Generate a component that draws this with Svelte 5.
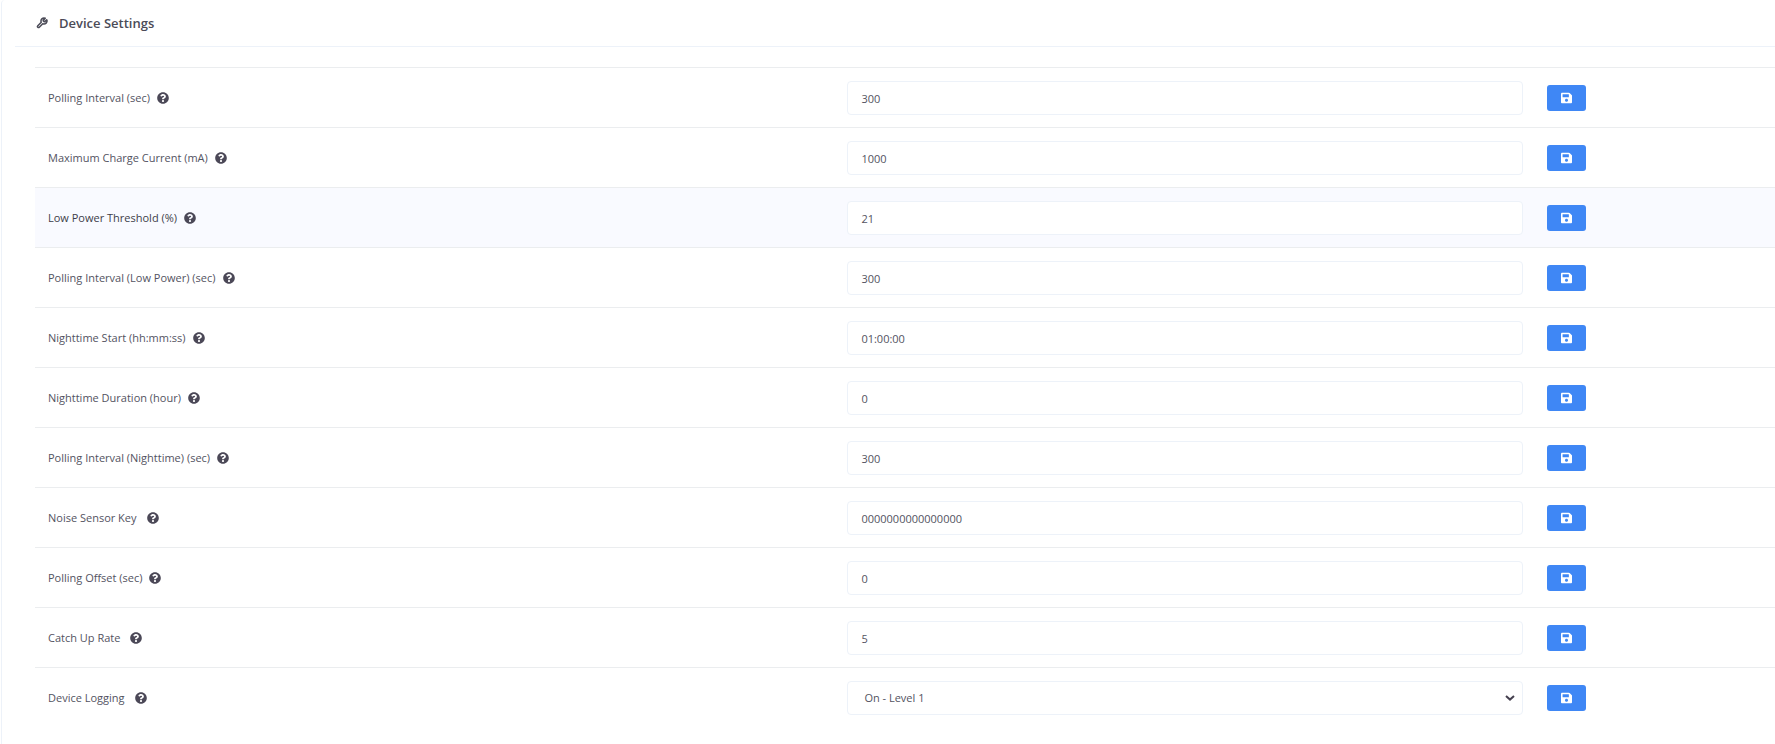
<script lang="ts">
	type Setting = {
		id: string;
		label: string;
		value: string;
		spaced?: boolean;
		active?: boolean;
		options?: string[];
	};

	let settings: Setting[] = $state([
		{ id: 'polling-interval', label: 'Polling Interval (sec)', value: '300' },
		{ id: 'max-charge', label: 'Maximum Charge Current (mA)', value: '1000' },
		{ id: 'low-power', label: 'Low Power Threshold (%)', value: '21', active: true },
		{ id: 'polling-low-power', label: 'Polling Interval (Low Power) (sec)', value: '300' },
		{ id: 'night-start', label: 'Nighttime Start (hh:mm:ss)', value: '01:00:00' },
		{ id: 'night-duration', label: 'Nighttime Duration (hour)', value: '0' },
		{ id: 'polling-night', label: 'Polling Interval (Nighttime) (sec)', value: '300' },
		{ id: 'noise-key', label: 'Noise Sensor Key', value: '0000000000000000', spaced: true },
		{ id: 'polling-offset', label: 'Polling Offset (sec)', value: '0' },
		{ id: 'catch-up', label: 'Catch Up Rate', value: '5', spaced: true },
		{
			id: 'logging',
			label: 'Device Logging',
			value: 'On - Level 1',
			spaced: true,
			options: ['Off', 'On - Level 1', 'On - Level 2']
		}
	]);
</script>

<section class="card">
	<header class="card-header">
		<svg class="tool-icon" viewBox="0 0 24 24" aria-hidden="true">
			<path
				d="M14.7 6.3a1 1 0 0 0 0 1.4l1.6 1.6a1 1 0 0 0 1.4 0l3.77-3.77a6 6 0 0 1-7.94 7.94l-6.91 6.91a2.12 2.12 0 0 1-3-3l6.91-6.91a6 6 0 0 1 7.94-7.94l-3.76 3.76z"
			/>
		</svg>
		<h4>Device Settings</h4>
	</header>

	<div class="card-body">
		<table>
			<colgroup>
				<col class="col-label" />
				<col class="col-value" />
				<col />
			</colgroup>
			<tbody>
				{#each settings as setting (setting.id)}
					<tr class:active={setting.active}>
						<td>
							<div class="label-row" class:spaced={setting.spaced}>
								<label for={setting.id}>{setting.label}</label>
								<button class="help-btn" type="button" aria-label="Help: {setting.label}">
									<svg viewBox="0 0 512 512" aria-hidden="true">
										<path
											d="M504 256c0 136.997-111.043 248-248 248S8 392.997 8 256C8 119.083 119.043 8 256 8s248 111.083 248 248zM262.655 90c-54.497 0-89.255 22.957-116.549 63.758-3.536 5.286-2.353 12.415 2.715 16.258l34.699 26.31c5.205 3.947 12.621 3.008 16.665-2.122 17.864-22.658 30.113-35.797 57.303-35.797 20.429 0 45.698 13.148 45.698 32.958 0 14.976-12.363 22.667-32.534 33.976C247.128 238.528 216 254.941 216 296v4c0 6.627 5.373 12 12 12h56c6.627 0 12-5.373 12-12v-1.333c0-28.462 83.186-29.647 83.186-106.667 0-58.002-60.165-102-116.531-102zM256 338c-25.365 0-46 20.635-46 46 0 25.364 20.635 46 46 46s46-20.636 46-46c0-25.364-20.635-46-46-46z"
										/>
									</svg>
								</button>
							</div>
						</td>
						<td>
							{#if setting.options}
								<div class="select-wrap">
									<select id={setting.id} class="field" bind:value={setting.value}>
										{#each setting.options as option}
											<option value={option}>{option}</option>
										{/each}
									</select>
									<svg class="chevron" viewBox="0 0 10 6" aria-hidden="true">
										<path d="M1 1l4 3.6L9 1" />
									</svg>
								</div>
							{:else}
								<input id={setting.id} class="field" type="text" bind:value={setting.value} />
							{/if}
						</td>
						<td>
							<button class="save-btn" type="button" aria-label="Save {setting.label}">
								<svg viewBox="0 0 448 512" preserveAspectRatio="none" aria-hidden="true">
									<path
										d="M433.941 129.941l-83.882-83.882A48 48 0 0 0 316.118 32H48C21.49 32 0 53.49 0 80v352c0 26.51 21.49 48 48 48h352c26.51 0 48-21.49 48-48V163.882a48 48 0 0 0-14.059-33.941zM224 416c-35.346 0-64-28.654-64-64 0-35.346 28.654-64 64-64s64 28.654 64 64c0 35.346-28.654 64-64 64zm96-304.52V212c0 6.627-5.373 12-12 12H76c-6.627 0-12-5.373-12-12V108c0-6.627 5.373-12 12-12h228.52c3.183 0 6.235 1.264 8.485 3.515l3.48 3.48A11.996 11.996 0 0 1 320 111.48z"
									/>
								</svg>
							</button>
						</td>
					</tr>
				{/each}
			</tbody>
		</table>
	</div>
</section>

<style>
	:global(body) {
		margin: 0;
		background: #fff;
	}

	.card {
		box-sizing: border-box;
		min-height: 100vh;
		margin-left: 1px;
		border-left: 1px solid #edf2f9;
		border-top-left-radius: 4px;
		color: #53535f;
		font-family: 'Open Sans', 'Noto Sans', sans-serif;
		font-size: 11px;
		line-height: 16px;
	}

	.card-header {
		display: flex;
		align-items: center;
		gap: 11px;
		height: 46px;
		margin-left: 13px;
		padding-left: 21px;
		border-bottom: 1px solid #edf2f9;
	}

	.card-header h4 {
		margin: 0;
		font-size: 13px;
		font-weight: 600;
		color: #4b4b57;
	}

	.tool-icon {
		width: 12px;
		height: 12px;
		fill: none;
		stroke: #4b4b57;
		stroke-width: 3;
		stroke-linejoin: round;
	}

	.card-body {
		padding: 20px 0 16px 33px;
	}

	table {
		width: 100%;
		table-layout: fixed;
		border-collapse: separate;
		border-spacing: 0;
	}

	.col-label {
		width: 46%;
	}

	.col-value {
		width: 40.2%;
	}

	td {
		padding: 13px 12px 12px;
		border-top: 1px solid #ebedef;
		vertical-align: middle;
	}

	td:first-child {
		padding-left: 13px;
	}

	tr.active td {
		background: #f9faff;
		color: #3d3d49;
	}

	.label-row {
		display: flex;
		align-items: center;
		gap: 7px;
	}

	.label-row.spaced {
		gap: 10px;
	}

	.help-btn {
		display: flex;
		padding: 0;
		border: none;
		background: none;
		cursor: pointer;
	}

	.help-btn svg {
		width: 12px;
		height: 12px;
		fill: #4b4857;
	}

	.field {
		display: block;
		box-sizing: border-box;
		width: 100%;
		height: 34px;
		padding: 0 13px;
		border: 1px solid #edf2f9;
		border-radius: 4px;
		background: #fff;
		color: #53535f;
		font: inherit;
		outline: none;
	}

	.select-wrap {
		position: relative;
	}

	select.field {
		padding: 0 24px 0 16px;
		appearance: none;
	}

	.chevron {
		position: absolute;
		top: 14px;
		right: 8px;
		width: 10px;
		height: 6px;
		fill: none;
		stroke: #45404f;
		stroke-width: 2;
		pointer-events: none;
	}

	.field:focus {
		border-color: #3f87f5;
	}

	.save-btn {
		display: flex;
		align-items: center;
		justify-content: center;
		width: 39px;
		height: 26px;
		padding: 0;
		border: none;
		border-radius: 3px;
		background: #3f87f5;
		cursor: pointer;
	}

	.save-btn:hover {
		background: #5a99f7;
	}

	.save-btn svg {
		width: 11px;
		height: 12px;
		fill: #fff;
	}
</style>
